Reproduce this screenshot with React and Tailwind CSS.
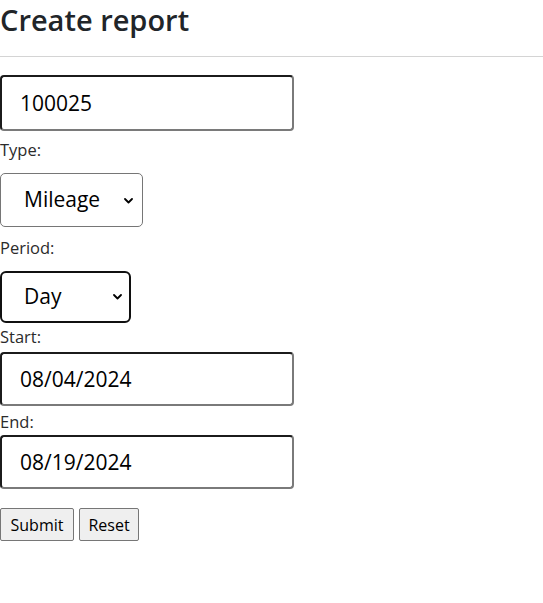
import React from 'react'

const Chevron = ({ className }) => (
  <svg className={className} width="9" height="6" viewBox="0 0 9 6" fill="none">
    <path d="M1 1l3.5 3.5L8 1" stroke="#000" strokeWidth="1.8" strokeLinecap="round" strokeLinejoin="round" />
  </svg>
)

const field =
  'block w-[294px] rounded-[4px] border-2 border-t-[#1b1b1b] border-l-[#1b1b1b] border-r-[#7a7a7a] border-b-[#7a7a7a] bg-white pl-[18px] text-[21px] text-black outline-none'

export default function App() {
  return (
    <div className="min-h-[603px] bg-white font-['Open_Sans',sans-serif] text-[#212529]">
      <h2 className="mt-[2px] text-[29px] font-semibold leading-[36px]">Create report</h2>
      <hr className="mt-[18px] border-t border-[#d4d4d4]" />
      <form className="flex flex-col items-start">
        <input className={`${field} mt-[18px] h-[56px]`} defaultValue="100025" />

        <label className="mt-[7px] block text-[16.5px] leading-[24px] text-[#2b2b2b]">Type:</label>
        <div className="relative mt-[11px] flex h-[54px] w-[143px] items-center rounded-[5px] border border-[#767676] bg-white pl-[23px] text-[21px] text-black">
          <span>Mileage</span>
          <Chevron className="absolute right-[9px] top-[24px]" />
        </div>

        <label className="mt-[9px] block text-[16.5px] leading-[24px] text-[#2b2b2b]">Period:</label>
        <div className="relative mt-[11px] flex h-[52px] w-[131px] items-center rounded-[6px] border-2 border-[#101010] bg-white pl-[22px] text-[21px] text-black">
          <span>Day</span>
          <Chevron className="absolute right-[7px] top-[21px]" />
        </div>

        <label className="mt-[2px] block text-[16.5px] leading-[24px] text-[#2b2b2b]">Start:</label>
        <input className={`${field} mt-[3px] h-[54px]`} defaultValue="08/04/2024" />

        <label className="mt-[4px] block text-[16.5px] leading-[24px] text-[#2b2b2b]">End:</label>
        <input className={`${field} mt-[1px] h-[54px]`} defaultValue="08/19/2024" />

        <div className="mt-[19px] flex gap-[5px]">
          <button type="button" className="h-[33px] w-[74px] rounded-[2px] border border-[#767676] bg-[#efefef] text-[16px] text-black">
            Submit
          </button>
          <button type="button" className="h-[33px] w-[60px] rounded-[2px] border border-[#767676] bg-[#efefef] text-[16px] text-black">
            Reset
          </button>
        </div>
      </form>
    </div>
  )
}
